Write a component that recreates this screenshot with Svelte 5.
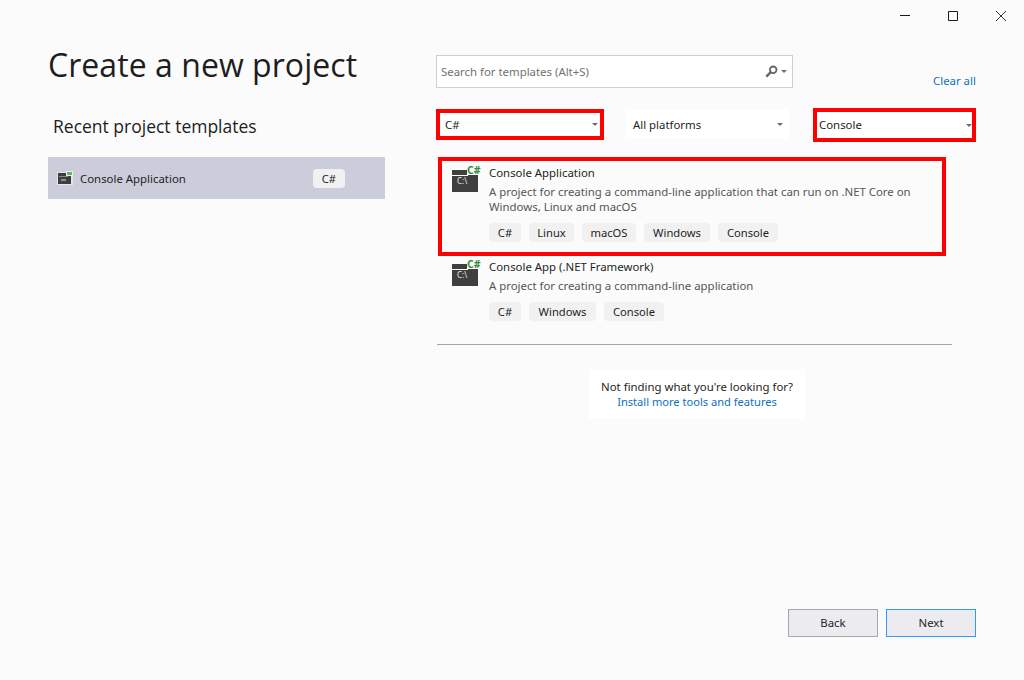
<script>
  const tagWidths = { 'C#': 32, Linux: 45, macOS: 54, Windows: 66, Console: 60 };
  const cards = [
    { title: 'Console Application', desc: ['A project for creating a command-line application that can run on .NET Core on', 'Windows, Linux and macOS'], tags: ['C#', 'Linux', 'macOS', 'Windows', 'Console'], selected: true },
    { title: 'Console App (.NET Framework)', desc: ['A project for creating a command-line application'], tags: ['C#', 'Windows', 'Console'], selected: false }
  ];
</script>

<div class="window">
  <div class="titlebar">
    <button class="ctl" aria-label="Minimize"><svg width="12" height="12" viewBox="0 0 12 12"><path d="M1 5.5h10" stroke="#1a1a1a" fill="none"/></svg></button>
    <button class="ctl" aria-label="Maximize"><svg width="12" height="12" viewBox="0 0 12 12"><path d="M1.5 1.5h9v9h-9z" stroke="#1a1a1a" fill="none"/></svg></button>
    <button class="ctl" aria-label="Close"><svg width="12" height="12" viewBox="0 0 12 12"><path d="M1 1l10 10M11 1L1 11" stroke="#333" fill="none"/></svg></button>
  </div>

  <div class="body">
    <aside class="left">
      <h1>Create a new project</h1>
      <h2>Recent project templates</h2>
      <div class="recent">
        <svg class="mini" width="16" height="15" viewBox="0 0 16 15">
          <rect x="0" y="1" width="16" height="13" fill="#e4e4ea"/>
          <rect x="1" y="2" width="13" height="11" fill="#3d3d3d"/>
          <rect x="2" y="5" width="9" height="1" fill="#8a8a8a"/>
          <rect x="9" y="0" width="7" height="5" fill="#e8f2e8"/>
          <rect x="10" y="1" width="5" height="3" fill="#6fb06f"/>
          <rect x="4" y="8" width="5" height="2" fill="#8f8f8f"/>
        </svg>
        <span class="recent-name">Console Application</span>
        <span class="tag recent-tag">C#</span>
      </div>
    </aside>

    <main class="right">
      <div class="search-row">
        <div class="search">
          <span class="placeholder">Search for templates (Alt+S)</span>
          <svg class="glass" width="13" height="13" viewBox="0 0 13 13"><circle cx="8.2" cy="4.8" r="3.3" fill="none" stroke="#666" stroke-width="1.8"/><path d="M5.8 7.2L1.3 11.7" stroke="#666" stroke-width="2.4"/></svg>
          <span class="caret search-caret"></span>
        </div>
        <a class="clear" href="#clear">Clear all</a>
      </div>

      <div class="filters">
        <div class="select red lang"><span>C#</span><i class="caret"></i></div>
        <div class="select platform"><span>All platforms</span><i class="caret"></i></div>
        <div class="select red type"><span>Console</span><i class="caret"></i></div>
      </div>

      <div class="list">
        {#each cards as c}
          <div class="card" class:selected={c.selected}>
            <svg class="icon" width="28" height="28" viewBox="0 0 28 28">
              <path d="M0 5h15v5h-15zM0 11h26v16h-26zM16 10h10v1h-10z" fill="#3f3f3f"/>
              <text x="5" y="19" class="prompt">C:\</text>
              <text x="15" y="9" class="sharp">C#</text>
            </svg>
            <div class="info">
              <div class="name">{c.title}</div>
              <div class="desc">{#each c.desc as l}<div>{l}</div>{/each}</div>
              <div class="tags">{#each c.tags as t}<span class="tag" style="width: {c.selected ? tagWidths[t] : t === 'Windows' ? 67 : tagWidths[t]}px">{t}</span>{/each}</div>
            </div>
          </div>
        {/each}
      </div>

      <hr />

      <div class="notfound">
        <div>Not finding what you're looking for?</div>
        <a href="#install">Install more tools and features</a>
      </div>
    </main>
  </div>

  <footer>
    <button class="btn">Back</button>
    <button class="btn primary">Next</button>
  </footer>
</div>

<style>
  :global(body) { margin: 0; background: #fbfbfb; }
  .window {
    width: 1024px; height: 680px; background: #fbfbfb; color: #1e1e1e;
    display: flex; flex-direction: column; overflow: hidden;
    font: 11.4px/15px "Noto Sans", "Open Sans", sans-serif;
  }
  .titlebar { height: 32px; display: flex; justify-content: flex-end; flex: none; }
  .ctl { width: 48px; height: 32px; padding: 0 0 0 2px; border: 0; background: none; display: flex; align-items: center; justify-content: center; }
  .body { flex: 1; display: grid; grid-template-columns: 337px 1fr; column-gap: 51px; padding-left: 48px; min-height: 0; }
  .left h1 { margin: 11px 0 0; font-size: 32px; line-height: 44px; font-weight: 400; font-family: "Open Sans", sans-serif; letter-spacing: 0.05px; color: #1e1e1e; }
  .left h2 { margin: 27px 0 0 5px; font-size: 17.5px; line-height: 24px; font-weight: 400; color: #1e1e1e; font-family: "Open Sans", sans-serif; }
  .recent { margin-top: 19px; height: 42px; background: #cbcddb; display: flex; align-items: center; padding: 0 40px 0 9px; }
  .mini { flex: none; }
  .recent-name { margin-left: 7px; flex: 1; }
  .recent-tag { background: #f1f1f3; padding: 0 9px; }

  .search-row { display: flex; align-items: flex-start; margin-top: 23px; height: 53px; }
  .search { width: 357px; height: 33px; box-sizing: border-box; border: 1px solid #cccedb; background: #fff; display: flex; align-items: center; padding: 0 5px 0 4px; }
  .placeholder { flex: 1; color: #717171; }
  .glass { margin-right: 3px; }
  .clear { margin: 18px 0 0 140px; color: #0e70c0; text-decoration: none; }
  .caret { display: block; flex: none; width: 0; height: 0; border-left: 3px solid transparent; border-right: 3px solid transparent; border-top: 3px solid #6e6e6e; }

  .filters { display: flex; align-items: flex-start; height: 34px; }
  .select { background: #fff; display: flex; align-items: center; justify-content: space-between; box-sizing: border-box; height: 30px; }
  .select span { display: block; }
  .red { border: 4px solid #f00; }
  .lang { width: 168px; height: 31px; margin-top: 1px; padding: 0 2px 0 5px; }
  .platform { width: 164px; margin: 1px 0 0 21px; padding: 0 6px 0 8px; }
  .type { width: 163px; margin-left: 24px; height: 34px; padding: 0 0 0 2px; }
  .type span { margin-top: -2px; }

  .list { margin-top: 15px; }
  .card { display: flex; width: 508px; box-sizing: border-box; margin-left: 2px; padding: 4px 0 0 10px; height: 88px; border: 4px solid transparent; border-width: 0 4px; }
  .card.selected { border: 4px solid #f00; height: 99px; padding: 5px 0 0 10px; }
  .icon { flex: none; margin-top: -1px; overflow: visible; }
  .prompt { font-size: 8px; font-weight: 400; fill: #e6e6e6; font-family: "Noto Sans", sans-serif; }
  .sharp { font-size: 10.5px; font-weight: 700; fill: #3a8a3a; font-family: "Noto Sans", sans-serif; }
  .info { margin: -1px 0 0 9px; min-width: 0; }
  .name { line-height: 15px; color: #1e1e1e; white-space: nowrap; }
  .desc { margin-top: 4px; color: #555; line-height: 15px; white-space: nowrap; }
  .tags { display: flex; gap: 8px; margin-top: 9px; }
  .tag { height: 19px; line-height: 19px; border-radius: 4px; background: #f1f1f1; font-size: 11.2px; color: #1e1e1e; box-sizing: border-box; white-space: nowrap; text-align: center; }

  hr { margin: 0 0 0 1px; width: 515px; height: 1px; border: 0; background: #a5a5a5; }
  .notfound { margin: 24px 0 0 153px; width: 216px; height: 50px; background: #fff; text-align: center; display: flex; flex-direction: column; justify-content: center; }
  .notfound a { color: #0e70c0; text-decoration: none; font-size: 11.1px; }

  footer { flex: none; height: 71px; box-sizing: border-box; display: flex; justify-content: flex-end; gap: 8px; padding-right: 48px; }
  .btn { width: 90px; height: 28px; border: 1px solid #a8a8a8; background: #ececf0; color: #1e1e1e; font: inherit; padding: 0 0 1px; }
  .primary { border-color: #3399ff; }
</style>
